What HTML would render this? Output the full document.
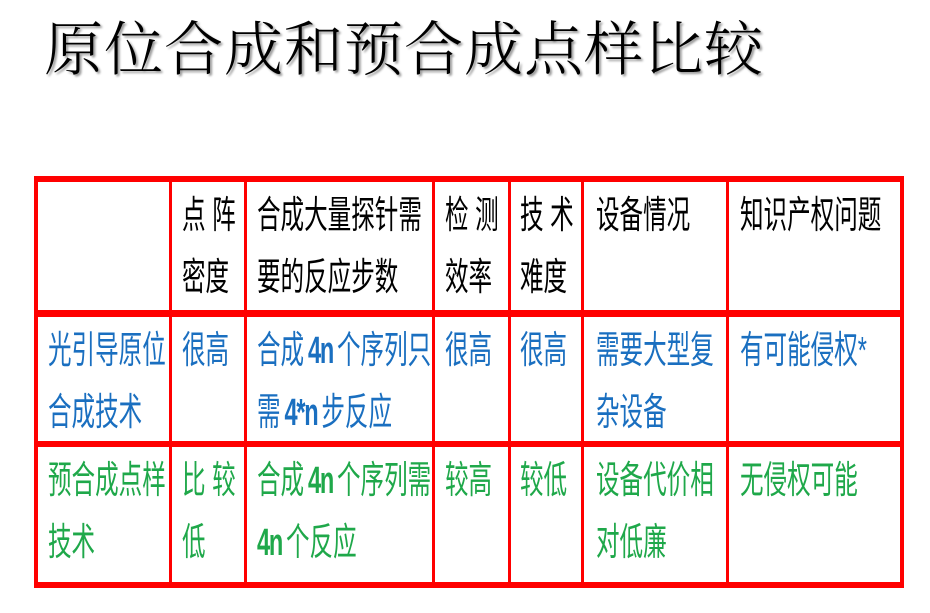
<!DOCTYPE html>
<html><head><meta charset="utf-8"><style>
body{margin:0;width:930px;height:613px;background:#fff;position:relative;overflow:hidden}
.t{position:absolute;left:44px;top:2px;font-family:"Noto Serif CJK SC","Liberation Serif",serif;font-weight:300;font-size:59px;letter-spacing:1px;color:#000;text-shadow:2px 2px 2px #999;white-space:nowrap}
.h{position:absolute;background:#f00}
.c{position:absolute;font-family:"Liberation Sans","Noto Sans CJK SC",sans-serif;font-size:38px;line-height:62px;white-space:nowrap;transform:scaleX(0.62);transform-origin:0 0}
.k{color:#000}.b{color:#1a6fc0}.g{color:#1fa84a}
b{font-weight:bold;letter-spacing:-2px}
</style></head><body>
<div class="t">原位合成和预合成点样比较</div>
<div class="h" style="left:34px;top:176px;width:870px;height:6px"></div>
<div class="h" style="left:34px;top:310px;width:870px;height:7px"></div>
<div class="h" style="left:34px;top:441px;width:870px;height:6px"></div>
<div class="h" style="left:34px;top:582px;width:870px;height:6px"></div>
<div class="h" style="left:34px;top:176px;width:4px;height:412px"></div>
<div class="h" style="left:169px;top:176px;width:3px;height:412px"></div>
<div class="h" style="left:244px;top:176px;width:3px;height:412px"></div>
<div class="h" style="left:432px;top:176px;width:3px;height:412px"></div>
<div class="h" style="left:508px;top:176px;width:3px;height:412px"></div>
<div class="h" style="left:581px;top:176px;width:3px;height:412px"></div>
<div class="h" style="left:726px;top:176px;width:3px;height:412px"></div>
<div class="h" style="left:900px;top:176px;width:4px;height:412px"></div>

<div class="c k" style="left:182px;top:185px">点 阵<br>密度</div>
<div class="c k" style="left:257px;top:185px">合成大量探针需<br>要的反应步数</div>
<div class="c k" style="left:445px;top:185px">检 测<br>效率</div>
<div class="c k" style="left:520px;top:185px">技 术<br>难度</div>
<div class="c k" style="left:596px;top:185px">设备情况</div>
<div class="c k" style="left:740px;top:185px">知识产权问题</div>

<div class="c b" style="left:48px;top:320px">光引导原位<br>合成技术</div>
<div class="c b" style="left:182px;top:320px">很高</div>
<div class="c b" style="left:257px;top:320px">合成&#8198;<b>4n</b>&#8198;个序列只<br>需&#8198;<b>4*n</b>&#8198;步反应</div>
<div class="c b" style="left:445px;top:320px">很高</div>
<div class="c b" style="left:520px;top:320px">很高</div>
<div class="c b" style="left:596px;top:320px">需要大型复<br>杂设备</div>
<div class="c b" style="left:740px;top:320px">有可能侵权*</div>

<div class="c g" style="left:48px;top:450px">预合成点样<br>技术</div>
<div class="c g" style="left:182px;top:450px">比 较<br>低</div>
<div class="c g" style="left:257px;top:450px">合成&#8198;<b>4n</b>&#8198;个序列需<br><b>4n</b>&#8198;个反应</div>
<div class="c g" style="left:445px;top:450px">较高</div>
<div class="c g" style="left:520px;top:450px">较低</div>
<div class="c g" style="left:596px;top:450px">设备代价相<br>对低廉</div>
<div class="c g" style="left:740px;top:450px">无侵权可能</div>
</body></html>
